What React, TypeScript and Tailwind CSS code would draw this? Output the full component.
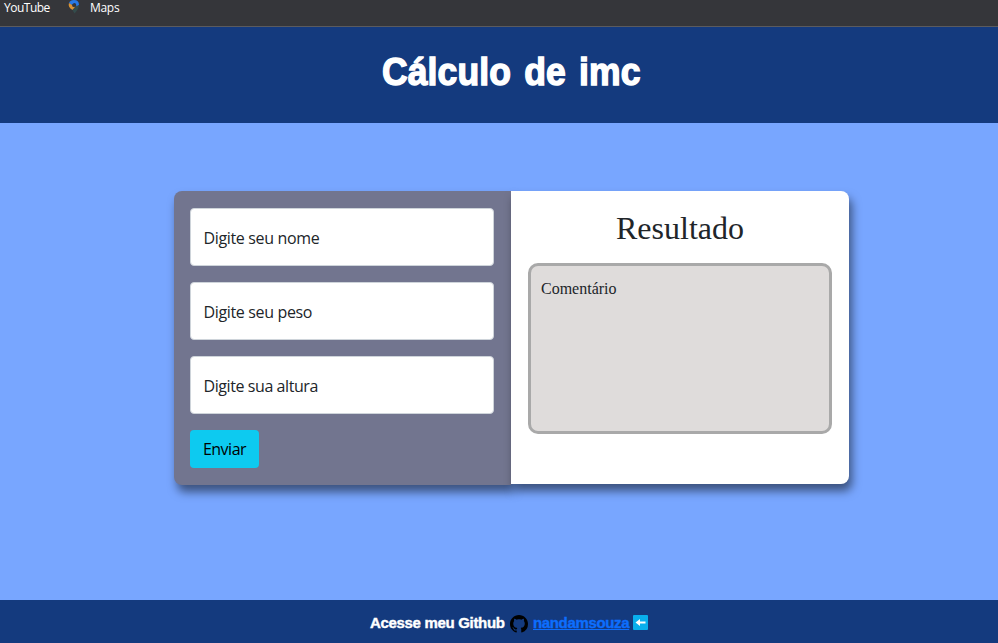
import React from "react";

const heavy = "font-['Liberation_Sans',sans-serif] font-bold text-white";

function Field({ label, spacing }: { label: string; spacing: string }) {
  return (
    <div className="flex h-[58px] items-center rounded-[4px] border border-[#ced4da] bg-white px-[12.5px] text-[#212529]">
      <span className={"whitespace-nowrap text-base leading-6 " + spacing}>{label}</span>
    </div>
  );
}

export default function App() {
  return (
    <div className="flex h-[643px] w-[998px] flex-col overflow-hidden bg-[#78a6ff] font-['Open_Sans',sans-serif]">
      <div className="flex h-[27px] shrink-0 items-start border-b border-[#5b5b5e] bg-[#35363a] pl-1 text-[12px] leading-4 text-white">
        <span className="w-[63px] tracking-[-0.5px]">YouTube</span>
        <svg className="mr-[9px] h-[14px] w-[14px]" viewBox="0 0 14 14">
          <path d="M2 3Q3 0 7 0q5 0 5 5L9 7Q10 3 7 3L4.500 5Z" fill="#2879e5" />
          <path d="M2 3 5 5Q5 8 8.500 6.500L5.500 10Q.5 7 2 3" fill="#d99335" />
          <path d="M12 5Q12 9 7.500 13.500L5.500 10 9 6.500" fill="#344c4c" />
        </svg>
        <span className="tracking-[-0.3px]">Maps</span>
      </div>
      <header className="flex h-24 shrink-0 justify-center bg-[#143a7e] pl-[25px] pt-[21px]">
        <h1 className={heavy + " scale-x-[0.935] whitespace-nowrap text-[38px] leading-[48px] tracking-[0.1px] [word-spacing:3.500px] [-webkit-text-stroke:1.4px_white]"}>Cálculo de imc</h1>
      </header>
      <main className="flex flex-1 items-start pl-[174px] pt-[68px]">
        <form className="flex h-[294px] w-[337px] flex-col gap-4 rounded-l-[8px] bg-[#72758f] px-4 pt-[17px] pr-[17px] shadow-[3px_7px_10px_rgba(0,0,0,0.5)]">
          <Field label="Digite seu nome" spacing="pt-px tracking-[-0.35px]" />
          <Field label="Digite seu peso" spacing="pt-px tracking-[-0.35px]" />
          <Field label="Digite sua altura" spacing="pt-px tracking-[-0.42px]" />
          <button type="button" className="flex h-[38px] w-[69px] items-center justify-center rounded-[4px] bg-[#0dcaf0] text-base text-black tracking-[-0.5px]">
            Enviar
          </button>
        </form>
        <section className="flex h-[293px] w-[338px] flex-col rounded-r-[8px] bg-white px-[17px] pt-[17px] font-['Liberation_Serif',serif] text-[#212529] shadow-[3px_7px_10px_rgba(0,0,0,0.5)]">
          <h2 className="h-[55px] text-center text-[32px] leading-[40px]">Resultado</h2>
          <div className="h-[171px] rounded-[10px] border-[3px] border-[#a9a9a9] bg-[#dfdcdb] px-[10px] pt-[11px] text-base leading-6">
            Comentário
          </div>
        </section>
      </main>
      <footer className="flex h-[43px] shrink-0 items-start bg-[#143a7e] pl-[370px] pt-[13px]">
        <p className={heavy + " flex items-start text-[15px] leading-5 [-webkit-text-stroke:0.4px]"}>
          <span className="w-[140px] whitespace-nowrap tracking-[-0.32px]">Acesse meu Github</span>
          <svg className="mt-[2px] mr-[5px] h-[18px] w-[18px] shrink-0 text-black" viewBox="0 0 16 16" fill="currentColor">
            <path d="M8 0C3.58 0 0 3.58 0 8c0 3.54 2.29 6.53 5.47 7.59.4.07.55-.17.55-.38 0-.19-.01-.82-.01-1.49-2.01.37-2.53-.49-2.69-.94-.09-.23-.48-.94-.82-1.13-.28-.15-.68-.52-.01-.53.63-.01 1.08.58 1.23.82.72 1.21 1.87.87 2.33.66.07-.52.28-.87.51-1.07-1.78-.2-3.64-.89-3.64-3.95 0-.87.31-1.59.82-2.15-.08-.2-.36-1.02.08-2.12 0 0 .67-.21 2.2.82.64-.18 1.32-.27 2-.27s1.36.09 2 .27c1.53-1.04 2.2-.82 2.2-.82.44 1.1.16 1.92.08 2.12.51.56.82 1.27.82 2.15 0 3.07-1.87 3.75-3.65 3.95.29.25.54.73.54 1.48 0 1.07-.01 1.93-.01 2.2 0 .21.15.46.55.38A8.01 8.01 0 0 0 16 8c0-4.42-3.58-8-8-8Z" />
          </svg>
          <a className="w-[100px] tracking-[-0.35px] text-[#0d6efd] underline">nandamsouza</a>
          <svg className="mt-[2px] h-[15px] w-[15px]" viewBox="0 0 15 15">
            <rect width="15" height="15" rx="1" fill="#09afed" />
            <path d="M2.500 7.500 7 4v2.500h5.500v2H7V11Z" fill="white" />
          </svg>
        </p>
      </footer>
    </div>
  );
}
